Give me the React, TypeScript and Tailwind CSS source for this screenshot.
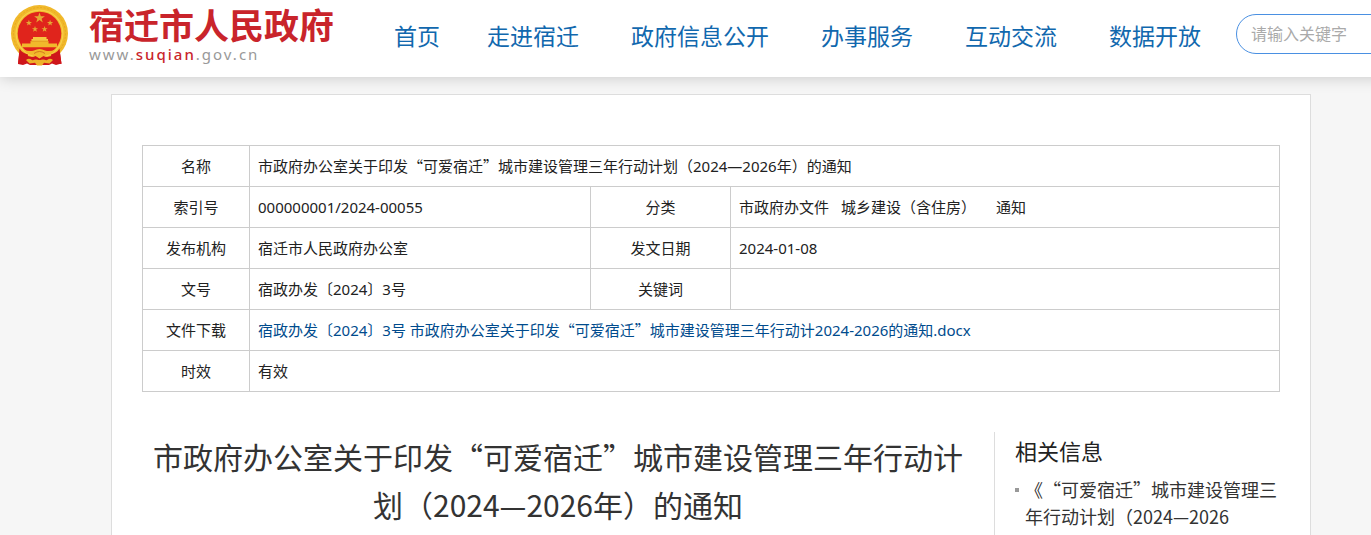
const navItems = ["走进宿迁", "政府信息公开", "办事服务", "互动交流", "数据开放"];

// Full-width quotes only exist in the CJK face, the latin one draws them narrow
function Quote({ text }: { text: string }) {
    return <span className="font-['Noto_Sans_CJK_SC',sans-serif] leading-none">{`“${text}”`}</span>;
}

function Emblem() {
    return (
        <svg viewBox="10 4 60 64" className="h-16 w-[60px] shrink-0" aria-hidden="true">
            {/* drapes */}
            <path
                d="M20 47 L18 64 L23 65 L27 63.5 L30 65 H49 L52 63.5 L56 65 L61.5 63.5 L59 47 Z"
                fill="#cf161b"
            />
            <path d="M22 55 L21 64 M57 55 L58 64" stroke="#9c1015" strokeWidth="1" />

            {/* ring */}
            <circle cx="39.5" cy="33.5" r="28.5" fill="#f1b92b" />
            <circle cx="39.5" cy="33.5" r="26" fill="none" stroke="#e2a51f" strokeWidth="0.8" strokeDasharray="2 1.6" />
            <circle cx="39.5" cy="33.5" r="23.4" fill="none" stroke="#f8cf4a" strokeWidth="1.2" />
            <circle cx="39.5" cy="33.5" r="21.8" fill="#e0241c" />

            {/* drapes over the foot of the ring */}
            <path d="M19.5 48.5 Q22 53 28 54.5 L27 63 L18 64 Z" fill="#cf161b" />
            <path d="M59.5 48.5 Q57 53 51 54.5 L52 63 L61.5 64 Z" fill="#cf161b" />

            {/* stars */}
            <path
                d="M39.5 12.6 L40.8 16.2 L44.9 16.3 L41.6 18.7 L42.8 22.4 L39.5 20.1 L36.2 22.4 L37.4 18.7 L34.1 16.3 L38.2 16.2 Z"
                fill="#e5a834"
            />
            <g fill="#e5a834">
                <path d="M28.9 19.8 l.8 2.2 2.3 0 -1.9 1.4 .7 2.2 -1.9 -1.3 -1.9 1.3 .7 -2.2 -1.9 -1.4 2.3 0 Z" />
                <path d="M50.1 19.8 l.8 2.2 2.3 0 -1.9 1.4 .7 2.2 -1.9 -1.3 -1.9 1.3 .7 -2.2 -1.9 -1.4 2.3 0 Z" />
                <path d="M35 26 l.8 2.2 2.3 0 -1.9 1.4 .7 2.2 -1.9 -1.3 -1.9 1.3 .7 -2.2 -1.9 -1.4 2.3 0 Z" />
                <path d="M44.6 26 l.8 2.2 2.3 0 -1.9 1.4 .7 2.2 -1.9 -1.3 -1.9 1.3 .7 -2.2 -1.9 -1.4 2.3 0 Z" />
            </g>

            {/* gate */}
            <path d="M33 37 h13.5 v2 h1.5 v2.2 H31.5 V39 H33 Z" fill="#f6c640" />
            <path d="M30.5 41 h18 v2.4 h8.5 v3.8 H22 v-3.8 h8.5 Z" fill="#f1b92b" />
            <path d="M31 41.2 H48" stroke="#d98a1c" strokeWidth="0.6" />

            {/* gear and ribbon */}
            <path
                d="M23.5 49.5 Q29 52 34 50.5 Q39.5 47.5 45 50.5 Q50 52 55.5 49.5 Q52 54.5 46.5 55 L43 57.5 H36 L32.5 55 Q27 54.5 23.5 49.5 Z"
                fill="#f1b92b"
            />
            <path d="M34 53.5 Q39.5 49.5 45 53.5" fill="none" stroke="#c9661a" strokeWidth="0.8" />
            <path
                d="M24 54 Q31 58.5 35.5 56 L39.5 58.5 L43.5 56 Q48 58.5 55 54 L54 59.5 Q45 61.5 39.5 60 Q34 61.5 25 59.5 Z"
                fill="#cf161b"
            />
            <path
                d="M26 60 Q29.5 57.5 32.5 60.5 Q36 58.5 39.5 60.5 Q43 58.5 46.5 60.5 Q49.5 57.5 53 60 L49.5 63.5 L44 62.8 L42 65.5 H37 L35 62.8 L29.5 63.5 Z"
                fill="#eeb22a"
            />
        </svg>
    );
}

function Label({ text }: { text: string }) {
    return <th className="border border-[#ccc] px-2 text-center font-normal">{text}</th>;
}

export default function App() {
    return (
        <div className="overflow-x-hidden">
            <div className="flex min-h-screen min-w-[1422px] flex-col bg-[#f6f6f6] font-['Noto_Sans','Noto_Sans_CJK_SC',sans-serif] text-[#222] [text-spacing-trim:space-all]">

                {/* HEADER */}
                <header className="flex h-[77px] items-start bg-white pl-[10px] shadow-[0_0_15px_rgba(0,0,0,0.2)]">
                    <a href="#" className="flex w-[384px] shrink-0 gap-[19px] pt-1">
                        <Emblem />
                        <span className="pt-1">
                            <span className="block text-[35px] leading-9 font-bold text-[#c9242b]">
                                宿迁市人民政府
                            </span>
                            <span className="block text-[15px] leading-5 tracking-[2px] text-[#999]">
                                www.<span className="font-medium text-[#c9242b]">suqian</span>.gov.cn
                            </span>
                        </span>
                    </a>

                    <nav className="flex shrink-0 pt-[18px] text-[23px] leading-9 text-[#1168ae]">
                        <a href="#" className="mr-[47px]">首页</a>
                        <ul className="flex gap-[52px]">
                            {navItems.map((item) => (
                                <li key={item}>
                                    <a href="#">{item}</a>
                                </li>
                            ))}
                        </ul>
                    </nav>

                    <input
                        type="text"
                        aria-label="请输入关键字"
                        placeholder="请输入关键字"
                        className="mt-[14px] ml-[35px] h-10 w-60 shrink-0 rounded-full border border-[#4a90e2] px-[14px] text-base placeholder:text-[#aaa]"
                    />
                </header>

                {/* CONTENT */}
                <main className="mx-auto mt-[17px] flex w-full max-w-[1200px] grow flex-col border border-b-0 border-[#ddd] bg-white px-[30px] pt-[50px]">
                    <table className="w-full table-fixed border-collapse text-[15px] leading-6 [&_td]:border [&_td]:border-[#ccc] [&_td]:px-2 [&_tr]:h-[41px]">
                        <colgroup>
                            <col className="w-[107px]" />
                            <col className="w-[341px]" />
                            <col className="w-[140px]" />
                            <col />
                        </colgroup>
                        <tbody>
                            <tr>
                                <Label text="名称" />
                                <td colSpan={3}>
                                    <span>市政府办公室关于印发</span>
                                    <Quote text="可爱宿迁" />
                                    <span>城市建设管理三年行动计划（2024—2026年）的通知</span>
                                </td>
                            </tr>
                            <tr>
                                <Label text="索引号" />
                                <td>000000001/2024-00055</td>
                                <Label text="分类" />
                                <td>
                                    <span className="mr-3">市政府办文件</span>
                                    <span className="mr-5">城乡建设（含住房）</span>
                                    <span>通知</span>
                                </td>
                            </tr>
                            <tr>
                                <Label text="发布机构" />
                                <td>宿迁市人民政府办公室</td>
                                <Label text="发文日期" />
                                <td>2024-01-08</td>
                            </tr>
                            <tr>
                                <Label text="文号" />
                                <td>宿政办发〔2024〕3号</td>
                                <Label text="关键词" />
                                <td></td>
                            </tr>
                            <tr>
                                <Label text="文件下载" />
                                <td colSpan={3}>
                                    <a href="#" className="text-[#004b8d]">
                                        <span>宿政办发〔2024〕3号 市政府办公室关于印发</span>
                                        <Quote text="可爱宿迁" />
                                        <span>城市建设管理三年行动计2024-2026的通知.docx</span>
                                    </a>
                                </td>
                            </tr>
                            <tr>
                                <Label text="时效" />
                                <td colSpan={3}>有效</td>
                            </tr>
                        </tbody>
                    </table>

                    <div className="mt-10 flex grow gap-5 font-['Noto_Sans_CJK_SC',sans-serif]">
                        <article className="grow basis-0">
                            <h1 className="text-center text-[30px] leading-[48px] text-[#333]">
                                市政府办公室关于印发“可爱宿迁”城市建设管理三年行动计划（2024—2026年）的通知
                            </h1>
                        </article>

                        {/* RELATED */}
                        <aside className="w-[286px] shrink-0 border-l border-[#ddd] pl-5">
                            <h2 className="text-[22px] leading-9">相关信息</h2>
                            <ul className="mt-2 text-lg leading-[27px] text-[#333]">
                                <li className="flex gap-[6px]">
                                    <span className="mt-3 size-1 shrink-0 bg-[#999]" />
                                    <a href="#">
                                        《“可爱宿迁”城市建设管理三年行动计划（2024—2026
                                    </a>
                                </li>
                            </ul>
                        </aside>
                    </div>
                </main>
            </div>
        </div>
    );
}
